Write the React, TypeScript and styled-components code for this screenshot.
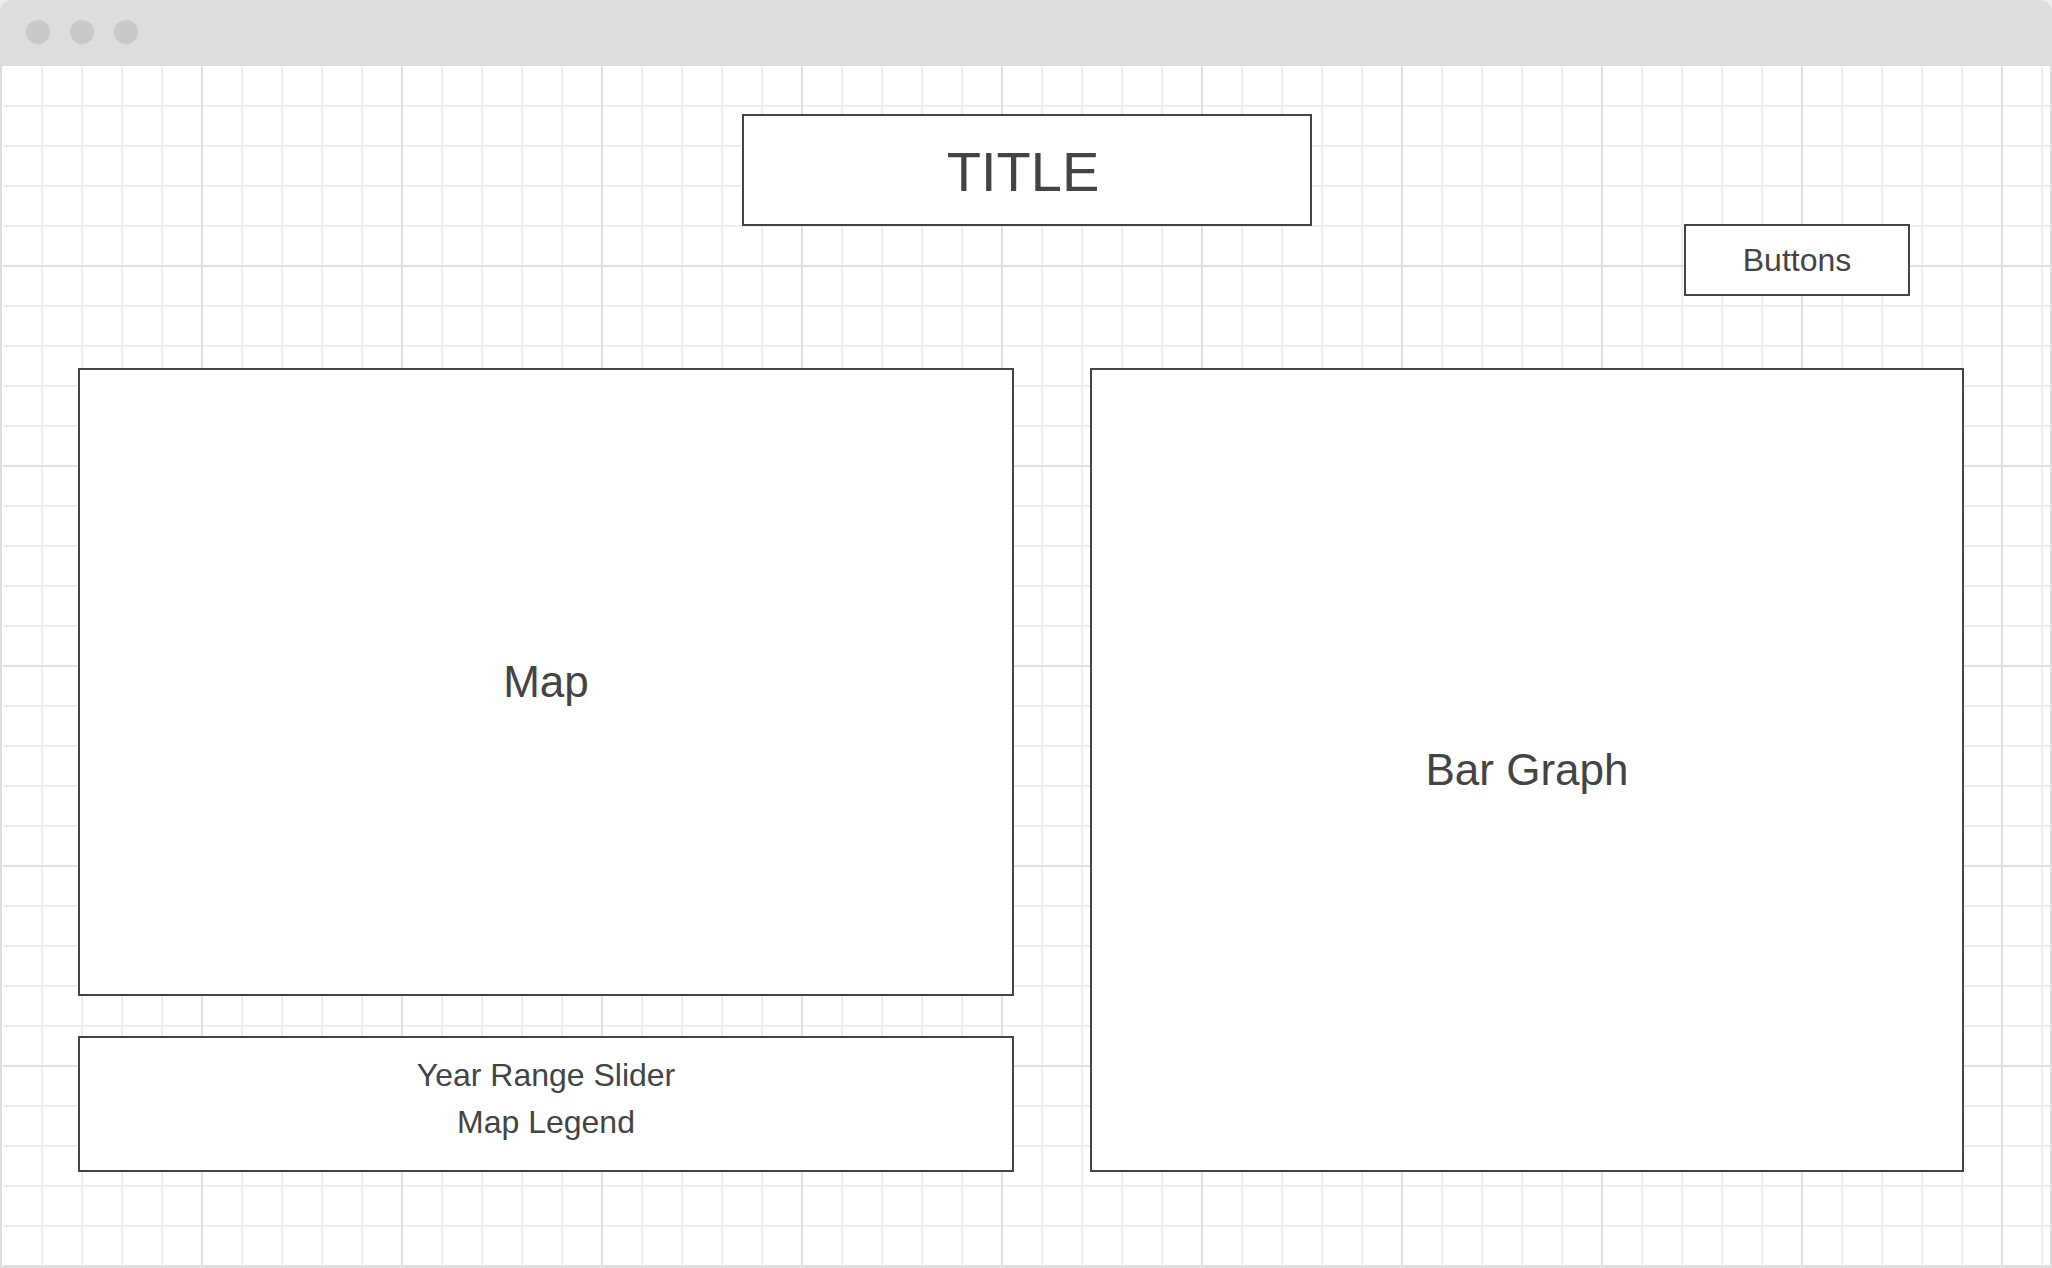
import React from "react";
import styled, { createGlobalStyle } from "styled-components";

const color = {
  page: "#eeeeee",
  chrome: "#dddddd",
  dot: "#c9c9c9",
  minor: "#eeeeee",
  major: "#e0e0e0",
  ink: "#444444",
  paper: "#ffffff",
};

const GlobalStyle = createGlobalStyle`
  *, *::before, *::after { box-sizing: border-box; }
  body {
    margin: 0;
    background: ${color.page};
    color: ${color.ink};
    font-family: "Liberation Sans", Arial, sans-serif;
  }
  h1, h2, p { margin: 0; font-weight: 400; }
`;

const BrowserWindow = styled.div`
  display: flex;
  flex-direction: column;
  min-height: 100vh;
  border: 2px solid ${color.chrome};
  border-top: 0;
  border-radius: 12px 12px 0 0;
  overflow: hidden;
  background: ${color.chrome};
`;

const TitleBar = styled.div`
  display: flex;
  gap: 20px;
  padding: 20px 24px 22px;
`;

const Dot = styled.span`
  width: 24px;
  height: 24px;
  border-radius: 50%;
  background: ${color.dot};
`;

const Canvas = styled.div`
  flex: 1;
  display: flex;
  flex-direction: column;
  gap: 72px;
  padding: 48px 0 94px;
  background-color: ${color.paper};
  background-image:
    linear-gradient(to right, ${color.major} 2px, transparent 2px),
    linear-gradient(to bottom, ${color.major} 2px, transparent 2px),
    linear-gradient(to right, ${color.minor} 2px, transparent 2px),
    linear-gradient(to bottom, ${color.minor} 2px, transparent 2px);
  background-size: 200px 200px, 200px 200px, 40px 40px, 40px 40px;
  background-position: 199px 0, 0 199px, 39px 0, 0 39px;
  box-shadow: inset 1px 1px ${color.paper};
`;

const Header = styled.header`
  display: grid;
  grid-template-columns: 1fr 570px 1fr;
  min-height: 182px;
  padding: 0 140px 0 142px;
`;

const Title = styled.h1`
  grid-column: 2;
  align-self: start;
  display: flex;
  align-items: center;
  justify-content: center;
  height: 112px;
  padding: 2px 8px 0 0;
  border: 2px solid ${color.ink};
  background: ${color.paper};
  font-size: 56px;
`;

const ActionButton = styled.button`
  grid-column: 3;
  place-self: end;
  width: 226px;
  height: 72px;
  padding: 0;
  border: 2px solid ${color.ink};
  background: ${color.paper};
  color: inherit;
  font: inherit;
  font-size: 32px;
`;

const Panels = styled.main`
  flex: 1;
  display: grid;
  grid-template-columns: 468fr 437fr;
  gap: 76px;
  padding: 0 86px 0 76px;
`;

const Column = styled.div`
  display: flex;
  flex-direction: column;
  gap: 40px;
`;

const Panel = styled.section`
  flex: 1;
  display: flex;
  align-items: center;
  justify-content: center;
  border: 2px solid ${color.ink};
  background: ${color.paper};
`;

const PanelName = styled.h2`
  font-size: 44px;
`;

const Controls = styled.section`
  padding: 14px 0 24px;
  border: 2px solid ${color.ink};
  background: ${color.paper};
  font-size: 32px;
  line-height: 47px;
  text-align: center;
`;

export default function App() {
  return (
    <>
      <GlobalStyle />
      <BrowserWindow>
        <TitleBar>
          <Dot />
          <Dot />
          <Dot />
        </TitleBar>
        <Canvas>
          <Header>
            <Title>TITLE</Title>
            <ActionButton type="button">Buttons</ActionButton>
          </Header>
          <Panels>
            <Column>
              <Panel>
                <PanelName>Map</PanelName>
              </Panel>
              <Controls>
                <p>Year Range Slider</p>
                <p>Map Legend</p>
              </Controls>
            </Column>
            <Column>
              <Panel>
                <PanelName>Bar Graph</PanelName>
              </Panel>
            </Column>
          </Panels>
        </Canvas>
      </BrowserWindow>
    </>
  );
}
